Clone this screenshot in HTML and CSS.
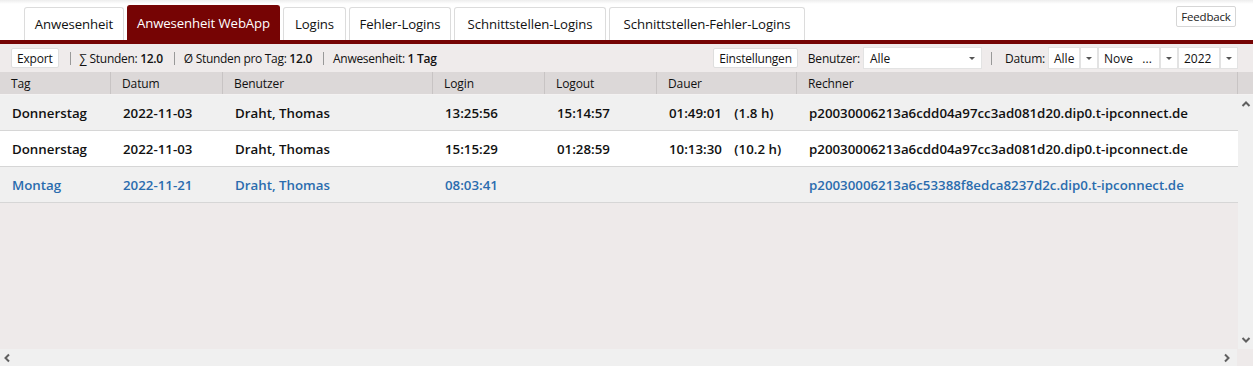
FILE: index.html
```html
<!DOCTYPE html>
<html lang="de">
<head>
<meta charset="UTF-8">
<title>Anwesenheit WebApp</title>
<link rel="stylesheet" href="styles.css">
</head>
<body>
  <div class="topbar">
    <div class="tabs">
      <div class="tab t-anw">Anwesenheit</div>
      <div class="tab t-web active">Anwesenheit WebApp</div>
      <div class="tab t-log">Logins</div>
      <div class="tab t-fehl">Fehler-Logins</div>
      <div class="tab t-snl">Schnittstellen-Logins</div>
      <div class="tab t-snf">Schnittstellen-Fehler-Logins</div>
    </div>
    <button class="feedback">Feedback</button>
  </div>

  <div class="toolbar">
    <button class="btn">Export</button>
    <span class="sep"></span>
    <span class="stat">∑ Stunden: <b>12.0</b></span>
    <span class="sep"></span>
    <span class="stat">Ø Stunden pro Tag: <b>12.0</b></span>
    <span class="sep"></span>
    <span class="stat">Anwesenheit: <b>1 Tag</b></span>
    <span class="spacer"></span>
    <button class="btn">Einstellungen</button>
    <span class="lbl first">Benutzer:</span>
    <div class="select user"><span>Alle</span><i class="caret"></i></div>
    <span class="sep wide"></span>
    <span class="lbl">Datum:</span>
    <div class="combo c-day"><span>Alle</span></div>
    <div class="drop"><i class="caret"></i></div>
    <div class="combo c-month"><span>Nove &nbsp; ...</span></div>
    <div class="drop"><i class="caret"></i></div>
    <div class="combo c-year"><span>2022</span></div>
    <div class="drop"><i class="caret"></i></div>
  </div>

  <div class="grid">
    <div class="head">
      <div class="col c1">Tag</div>
      <div class="col c2">Datum</div>
      <div class="col c3">Benutzer</div>
      <div class="col c4">Login</div>
      <div class="col c5">Logout</div>
      <div class="col c6">Dauer</div>
      <div class="col c7">Rechner</div>
      <div class="col c8"></div>
    </div>
    <div class="body">
      <div class="rows">
        <div class="row">
          <div class="col c1">Donnerstag</div>
          <div class="col c2">2022-11-03</div>
          <div class="col c3">Draht, Thomas</div>
          <div class="col c4">13:25:56</div>
          <div class="col c5">15:14:57</div>
          <div class="col c6">01:49:01 <span class="hrs">(1.8 h)</span></div>
          <div class="col c7">p20030006213a6cdd04a97cc3ad081d20.dip0.t-ipconnect.de</div>
        </div>
        <div class="row alt">
          <div class="col c1">Donnerstag</div>
          <div class="col c2">2022-11-03</div>
          <div class="col c3">Draht, Thomas</div>
          <div class="col c4">15:15:29</div>
          <div class="col c5">01:28:59</div>
          <div class="col c6">10:13:30 <span class="hrs">(10.2 h)</span></div>
          <div class="col c7">p20030006213a6cdd04a97cc3ad081d20.dip0.t-ipconnect.de</div>
        </div>
        <div class="row open">
          <div class="col c1">Montag</div>
          <div class="col c2">2022-11-21</div>
          <div class="col c3">Draht, Thomas</div>
          <div class="col c4">08:03:41</div>
          <div class="col c5"></div>
          <div class="col c6"></div>
          <div class="col c7">p20030006213a6c53388f8edca8237d2c.dip0.t-ipconnect.de</div>
        </div>
      </div>
      <div class="vscroll">
        <svg width="10" height="8" viewBox="0 0 10 8"><path d="M1.5 6 L5 2.5 L8.5 6" fill="none" stroke="#606060" stroke-width="2"/></svg>
        <svg width="10" height="8" viewBox="0 0 10 8"><path d="M1.5 2 L5 5.5 L8.5 2" fill="none" stroke="#606060" stroke-width="2"/></svg>
      </div>
    </div>
    <div class="hscroll">
      <svg width="8" height="10" viewBox="0 0 8 10"><path d="M6 1.5 L2.5 5 L6 8.5" fill="none" stroke="#606060" stroke-width="2"/></svg>
      <svg width="8" height="10" viewBox="0 0 8 10"><path d="M2 1.5 L5.5 5 L2 8.5" fill="none" stroke="#606060" stroke-width="2"/></svg>
      <span class="corner"></span>
    </div>
  </div>
</body>
</html>
```

FILE: styles.css
```css
body {
  margin: 0;
  font-family: "Open Sans", "Noto Sans", sans-serif;
  font-size: 12px;
  color: #111;
  background: #fff;
  width: 1253px;
  height: 366px;
  overflow: hidden;
  display: flex;
  flex-direction: column;
}
.topbar {
  height: 40px;
  display: flex;
  align-items: flex-start;
  justify-content: space-between;
  background: linear-gradient(to bottom, #ededed 0px, #fff 4px);
  border-bottom: 4px solid #760404;
}
.tabs {
  display: flex;
  gap: 3px;
  padding: 7px 0 0 24px;
}
.tab {
  height: 33px;
  display: flex;
  align-items: center;
  justify-content: center;
  font-size: 13.2px;
  letter-spacing: -0.1px;
  border: 1px solid #dcdcdc;
  border-bottom: none;
  border-radius: 3px 3px 0 0;
  background: #fff;
  box-sizing: border-box;
  color: #111;
}
.t-anw { width: 100px; }
.t-web { width: 153px; }
.t-log { width: 63px; }
.t-fehl { width: 102px; }
.t-snl { width: 152px; }
.t-snf { width: 196px; }
.tab.active {
  background: #760404;
  border-color: #760404;
  color: #fff;
  height: 35px;
  margin-top: -2px;
}
.feedback {
  margin: 6px 17px 0 0;
  font-family: inherit;
  font-size: 11.5px;
  letter-spacing: -0.2px;
  height: 21px;
  width: 60px;
  padding: 0;
  background: #fff;
  border: 1px solid #d6d6d6;
  border-radius: 2px;
  color: #222;
}
.toolbar {
  height: 28px;
  background: #efebeb;
  display: flex;
  align-items: center;
  padding: 0 15px 0 11px;
}
.btn {
  font-family: inherit;
  font-size: 12px;
  height: 20px;
  padding: 0 5px;
  background: #fff;
  border: 1px solid #dedede;
  border-radius: 2px;
  color: #111;
  letter-spacing: -0.2px;
}
.sep {
  width: 1px;
  height: 13px;
  background: #999;
  margin: 0 9px 0 11px;
}
.sep.wide {
  margin: 0 13px 0 9px;
}
.stat {
  font-size: 12px;
  letter-spacing: -0.3px;
}
.stat b {
  font-weight: 600;
}
.spacer {
  flex: 1;
}
.lbl {
  font-size: 12px;
  margin-right: 3px;
  letter-spacing: -0.2px;
}
.lbl.first {
  margin-left: 10px;
}
.select, .combo, .drop {
  height: 22px;
  background: #fff;
  border: 1px solid #e3e3e3;
  box-sizing: border-box;
  display: flex;
  align-items: center;
  font-size: 12px;
}
.select {
  width: 119px;
  padding: 0 6px;
  justify-content: space-between;
}
.caret {
  width: 0;
  height: 0;
  border-left: 3.5px solid transparent;
  border-right: 3.5px solid transparent;
  border-top: 3.5px solid #555;
}
.combo {
  padding: 0 5px;
}
.combo.c-day { width: 32px; }
.combo.c-month { width: 62px; }
.combo.c-year { width: 42px; }
.drop {
  width: 18px;
  justify-content: center;
}
.grid {
  flex: 1;
  display: flex;
  flex-direction: column;
  background: #eeeaea;
  min-height: 0;
}
.head {
  height: 22px;
  display: flex;
  background: #dcd8d8;
  font-size: 12px;
  flex-shrink: 0;
}
.head .col {
  border-right: 1px solid #c8c4c4;
  display: flex;
  align-items: center;
  letter-spacing: -0.1px;
}
.col {
  box-sizing: border-box;
  padding-left: 11px;
  white-space: nowrap;
}
.c1 { width: 111px; }
.c2 { width: 112px; }
.c3 { width: 210px; }
.c4 { width: 112px; }
.c5 { width: 112px; }
.c6 { width: 140px; }
.c7 { width: 441px; }
.c8 { flex: 1; border-right: none !important; }
.body {
  flex: 1;
  display: flex;
  min-height: 0;
  border-top: 1px solid #f4f2f2;
}
.rows {
  flex: 1;
}
.row {
  height: 36px;
  display: flex;
  align-items: center;
  background: #f0f0f0;
  border-bottom: 1px solid #d6d6d6;
  box-sizing: border-box;
  font-size: 13.3px;
  font-weight: 600;
  letter-spacing: 0;
}
.row .col {
  padding-left: 12px;
}
.row.alt {
  background: #fff;
}
.row.open {
  color: #2a6cae;
}
.hrs {
  margin-left: 9px;
}
.vscroll {
  width: 16px;
  background: #f0f0f0;
  display: flex;
  flex-direction: column;
  justify-content: space-between;
  align-items: center;
  padding: 5px 0 5px;
}
.hscroll {
  height: 17px;
  background: #f0f0f0;
  display: flex;
  align-items: center;
  justify-content: space-between;
  padding-left: 3px;
  flex-shrink: 0;
}
.hscroll svg:nth-child(2) {
  margin-left: auto;
  margin-right: 6px;
}
.corner {
  width: 16px;
  height: 17px;
  background: #eeeaea;
}
```
